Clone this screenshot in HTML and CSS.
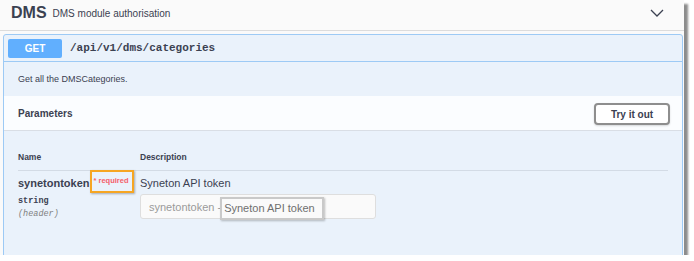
FILE: index.html
```html
<!DOCTYPE html>
<html lang="en">
<head>
    <meta charset="UTF-8">
    <title>DMS</title>
    <link rel="stylesheet" href="styles.css">
</head>
<body>
    <div class="shot">
        <div class="tag">
            <span class="tag-name">DMS</span>
            <span class="tag-desc">DMS module authorisation</span>
            <svg class="chevron" width="14" height="8" viewBox="0 0 14 8">
                <path d="M1 1 L7 7 L13 1" fill="none" stroke="#3b4151" stroke-width="1.3"/>
            </svg>
        </div>

        <div class="opblock">
            <div class="summary">
                <span class="method">GET</span>
                <span class="path">/api/v1/dms/categories</span>
            </div>

            <div class="description">Get all the DMSCategories.</div>

            <div class="section-header">
                <span class="section-title">Parameters</span>
                <button class="try-out">Try it out</button>
            </div>

            <div class="params">
                <div class="params-head">
                    <span class="col-name">Name</span>
                    <span class="col-desc">Description</span>
                </div>
                <div class="param-row">
                    <div class="col-name">
                        <div class="param-name">
                            <span>synetontoken</span>
                            <!-- marked field -->
                            <span class="required">* required</span>
                        </div>
                        <div class="param-type">string</div>
                        <div class="param-in">(header)</div>
                    </div>
                    <div class="col-desc">
                        <div class="param-desc">Syneton API token</div>
                        <div class="param-input">
                            <span>synetontoken -</span>
                            <span class="hint">Syneton API token</span>
                        </div>
                    </div>
                </div>
            </div>
        </div>
    </div>
</body>
</html>
```

FILE: styles.css
```css
body {
    margin: 0;
    background: #fff;
    font-family: 'Liberation Sans', Arial, sans-serif;
    color: #3b4151;
}

.shot {
    width: 684px;
    height: 255px;
    overflow: hidden;
    background: #fafafa;
    box-shadow: 4px 4px 2px rgba(0, 0, 0, 0.45);
}

/* tag header */
.tag {
    height: 26px;
    padding: 0 11px 4px;
    border-bottom: 1px solid #dcdcdc;
    display: flex;
    align-items: center;
}

.tag-name {
    font-size: 16px;
    font-weight: bold;
}

.tag-desc {
    font-size: 10px;
    margin-left: 6px;
}

.chevron {
    margin-left: auto;
    margin-right: 9px;
    margin-top: -1px;
}

/* operation block */
.opblock {
    margin: 3px 1px 0 3px;
    border: 1px solid #9dcaf5;
    border-radius: 3px;
    background: #eaf2fb;
    height: 240px;
}

.summary {
    height: 26px;
    padding: 0 4px;
    border-bottom: 1px solid #9dcaf5;
    display: flex;
    align-items: center;
}

.method {
    width: 54px;
    height: 19px;
    border-radius: 2px;
    background: #61affe;
    color: #fff;
    font-size: 10px;
    font-weight: bold;
    display: flex;
    align-items: center;
    justify-content: center;
}

.path {
    margin-left: 8px;
    font-family: 'Liberation Mono', 'Courier New', monospace;
    font-size: 11px;
    font-weight: bold;
}

.description {
    height: 34px;
    padding: 0 14px;
    font-size: 9px;
    display: flex;
    align-items: center;
}

.section-header {
    height: 34px;
    padding: 0 12px 0 14px;
    background: #fbfdff;
    border-bottom: 1px solid #d9dee5;
    display: flex;
    align-items: center;
    justify-content: space-between;
}

.section-title {
    font-size: 10px;
    font-weight: bold;
    margin-top: 1px;
}

.try-out {
    width: 76px;
    height: 22px;
    border: 2px solid #8e8e8e;
    border-radius: 4px;
    background: #fff;
    font-family: 'Liberation Sans', Arial, sans-serif;
    font-size: 10px;
    font-weight: bold;
    color: #3b4151;
    box-shadow: 0 1px 2px rgba(0, 0, 0, 0.15);
    margin-top: 2px;
}

/* parameters table */
.params {
    padding: 20px 14px 0;
}

.params-head {
    display: flex;
    font-size: 8.5px;
    font-weight: bold;
    line-height: 12px;
    padding-bottom: 7px;
    border-bottom: 1px solid #d3dbe5;
}

.col-name {
    width: 122px;
    flex-shrink: 0;
}

.param-row {
    display: flex;
    padding-top: 6px;
}

.param-name {
    display: flex;
    align-items: flex-start;
    font-size: 11px;
    font-weight: bold;
    line-height: 13px;
}

.required {
    margin-top: -7px;
    padding: 4px 3px 5px 2px;
    border: 2px solid #f6a623;
    box-shadow: 1px 1px 2px rgba(0, 0, 0, 0.3);
    font-size: 7.5px;
    line-height: 10px;
    color: #f5606a;
    white-space: nowrap;
}

.param-type {
    margin-top: 2px;
    font-family: 'Liberation Mono', 'Courier New', monospace;
    font-size: 8.5px;
    font-weight: bold;
    line-height: 12px;
}

.param-in {
    margin-top: 1px;
    font-family: 'Liberation Mono', 'Courier New', monospace;
    font-size: 8.5px;
    font-style: italic;
    line-height: 12px;
    color: #808080;
}

.param-desc {
    font-size: 11px;
    line-height: 13px;
}

.param-input {
    margin-top: 4px;
    width: 226px;
    height: 23px;
    padding-left: 8px;
    border: 1px solid #dedede;
    border-radius: 3px;
    background: #fafafa;
    font-size: 11px;
    color: #9a9a9a;
    display: flex;
    align-items: center;
}

.hint {
    margin-top: 3px;
    margin-left: -1px;
    padding: 3px 7px 4px 2px;
    border: 2px solid #c9c9c9;
    box-shadow: 1px 1px 2px rgba(0, 0, 0, 0.25);
    color: #6f6f6f;
}
```
